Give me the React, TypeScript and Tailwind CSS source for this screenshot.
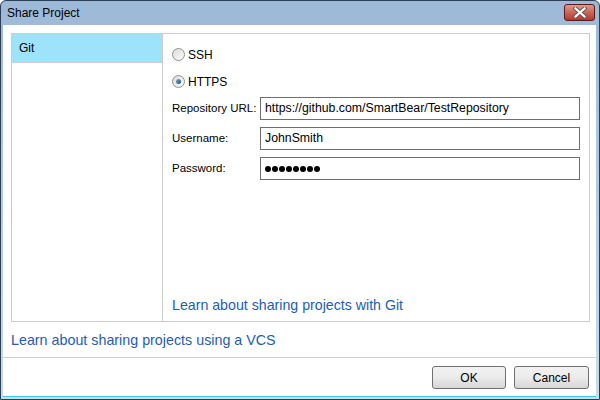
import React from "react";

const ui = { fontFamily: '"Liberation Sans", Arial, sans-serif' };

function Radio({ checked, label }: { checked?: boolean; label: string }) {
  return (
    <div className="flex items-center h-[13px]">
      <div className="w-[13px] h-[13px] rounded-full border border-[#8e8f8f] bg-gradient-to-br from-[#dcdcdc] to-[#fbfbfb] flex items-center justify-center">
        {checked && (
          <div className="w-[5px] h-[5px] rounded-full bg-gradient-to-br from-[#8aa5c9] to-[#2b4a78]" />
        )}
      </div>
      <span className="ml-[3px] text-[12px] text-black leading-none">{label}</span>
    </div>
  );
}

function Field({ label, children }: { label: string; children: React.ReactNode }) {
  return (
    <div className="flex items-center h-[23px]">
      <div className="w-[88px] text-[11.5px] text-black shrink-0">{label}</div>
      <div className="flex-1 h-[23px] border border-[#6e6e6e] bg-white flex items-center px-[4px] text-[12.3px] text-black">
        {children}
      </div>
    </div>
  );
}

export default function App() {
  return (
    <div
      className="w-[600px] h-[400px] flex flex-col bg-gradient-to-b from-[#9db9d8] to-[#c9dbee] border border-[#2c3f57] rounded-t-[6px] overflow-hidden"
      style={ui}
    >
      {/* title bar */}
      <div className="h-[24px] shrink-0 flex items-center justify-between pl-[6px] pr-[4px]">
        <span className="text-[12px] text-black">Share Project</span>
        <div className="w-[31px] h-[17px] mt-[-1px] rounded-[3px] border border-[#5c1a1a] bg-gradient-to-b from-[#dc9a8f] via-[#c96656] to-[#b3382a] flex items-center justify-center">
          <svg width="14" height="11" viewBox="0 0 14 11">
            <path
              d="M2.5 1.5 L11.5 9.5 M11.5 1.5 L2.5 9.5"
              stroke="#5a5a5a"
              strokeWidth="4"
              strokeLinecap="square"
            />
            <path
              d="M2.5 1.5 L11.5 9.5 M11.5 1.5 L2.5 9.5"
              stroke="#ffffff"
              strokeWidth="2.2"
              strokeLinecap="square"
            />
          </svg>
        </div>
      </div>

      {/* content */}
      <div className="flex-1 flex flex-col bg-white ml-[2px] mr-[3px] mb-[2px] border-b border-[#3fc3e6]">
        <div className="flex-1 flex flex-col">
          <div className="mt-[8px] ml-[8px] mr-[6px] h-[289px] border border-[#cccccc] flex">
            {/* left list */}
            <div className="w-[151px] border-r border-[#cccccc] flex flex-col">
              <div className="h-[29px] bg-[#9de3fc] border-b border-[#cfcfcf] flex items-center pl-[7px] text-[12px] text-black">
                Git
              </div>
            </div>
            {/* right */}
            <div className="flex-1 flex flex-col px-[9px] pt-[14px] pb-[8px]">
              <Radio label="SSH" />
              <div className="mt-[14px]">
                <Radio label="HTTPS" checked />
              </div>
              <div className="mt-[9px] flex flex-col gap-[7px]">
                <Field label="Repository URL:">https://github.com/SmartBear/TestRepository</Field>
                <Field label="Username:">JohnSmith</Field>
                <Field label="Password:">
                  <div className="flex gap-[1px]">
                    {Array.from({ length: 8 }).map((_, i) => (
                      <div key={i} className="w-[6px] h-[6px] rounded-full bg-black" />
                    ))}
                  </div>
                </Field>
              </div>
              <div className="mt-auto text-[14.2px] leading-[16px] text-[#1e5eb0]">
                Learn about sharing projects with Git
              </div>
            </div>
          </div>
          <div className="mt-[10px] ml-[8px] text-[14.3px] leading-[16px] text-[#1e5eb0]">
            Learn about sharing projects using a VCS
          </div>
        </div>
        <div className="mt-[9px] h-px bg-[#d0d0d0]" />
        <div className="h-[38px] flex justify-end items-start pt-[8px] pr-[7px] gap-[8px]">
          <button className="w-[74px] h-[23px] rounded-[3px] border border-[#707070] bg-gradient-to-b from-[#f2f2f2] via-[#ebebeb] to-[#d6d6d6] text-[12px] text-black">
            OK
          </button>
          <button className="w-[75px] h-[23px] rounded-[3px] border border-[#707070] bg-gradient-to-b from-[#f2f2f2] via-[#ebebeb] to-[#d6d6d6] text-[12px] text-black">
            Cancel
          </button>
        </div>
      </div>
    </div>
  );
}
